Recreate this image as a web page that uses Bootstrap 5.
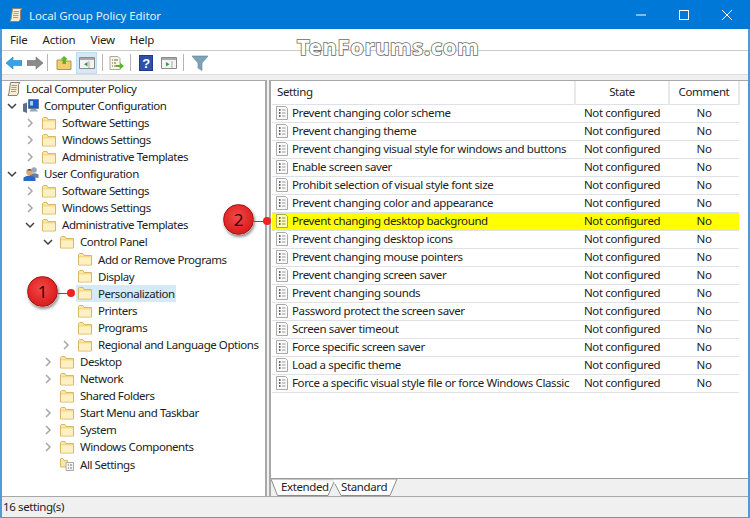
<!DOCTYPE html>
<html lang="en"><head><meta charset="utf-8"><title>Local Group Policy Editor</title>
<link href="https://cdn.jsdelivr.net/npm/bootstrap@5.3.0/dist/css/bootstrap.min.css" rel="stylesheet">
<style>
html,body{height:100%;margin:0;overflow:hidden}
body{font-family:"Noto Sans","Open Sans",sans-serif;font-size:11.5px;letter-spacing:-.38px;color:#222;background:#fff;line-height:1}
.gp-win{height:518px;width:750px;border:solid #4f9ad8;border-width:0 2px 3px 2px;position:relative}
.gp-title{height:29px;background:#0078d7;color:#e3f0fa;margin:0 -2px;padding-left:8px;position:relative;letter-spacing:-.1px}
.gp-title .gp-name{margin-left:5px;margin-top:2px}
.gp-wm{position:absolute;left:295px;top:33px;font-size:22px;font-weight:700;color:#fff;letter-spacing:.65px;-webkit-text-stroke:1.6px #6a6a6a;paint-order:stroke fill;z-index:5;line-height:26px}
.gp-cap{position:absolute;top:9px;display:block}
.gp-menu{height:21px;background:#fff;padding-left:8px;gap:15px;border-bottom:1px solid #ccc;box-sizing:content-box;letter-spacing:-.2px}
.gp-tools{height:23px;background:#fff;padding-left:4px;position:relative}
.gp-tool{width:16px;height:16px;flex:none;display:block}
.gp-sep{width:1px;height:17px;background:#b5b5b5;flex:none}
.gp-act{background:#d6e8f6;border:1px solid #bcdcf2;width:21px;height:22px;display:flex;align-items:center;justify-content:center;flex:none}
.gp-gap{height:6px;background:#f0f0f0;border-top:1px solid #ddd}
.gp-main{height:416px;background:#f0f0f0}
.gp-left{width:265px;background:#fff;border-top:1px solid #a8a8a8;border-right:2px solid #a8a8a8;flex:none;overflow:hidden}
.gp-tree{margin-top:-1px;letter-spacing:-.44px}
.gp-right{width:479px;margin-left:2px;background:#fff;border:solid #a8a8a8;border-width:1px 0 0 2px;flex:none;position:relative}
.gp-rowt{height:17.09px;display:flex;align-items:center;white-space:nowrap}
.gp-l0{padding-left:21px}.gp-l2{padding-left:39px}.gp-l3{padding-left:57px}.gp-l4{padding-left:75px}
.gp-root{padding-left:4px}
.gp-root .gp-ic{margin-right:4px}
.gp-chev{width:0;height:10px;flex:none;position:relative;display:block;overflow:visible}
.gp-chev svg{position:absolute;left:-16px;top:0}
.gp-ic{width:16px;height:16px;flex:none;display:block;margin-right:5px}
.gp-sel{background:#d5e9f8;display:flex;align-items:center;height:17px;width:100px;margin-left:-1px;padding-left:1px}
table.gp-tbl{table-layout:fixed;width:467px;margin:0 0 0 1px;--bs-table-bg:transparent}
.gp-tbl th,.gp-tbl td{padding:0;font-weight:400;vertical-align:middle;white-space:nowrap;color:#222;background:transparent;overflow:hidden}
.gp-tbl thead th{height:23px;text-align:center;border-right:2px solid #e9e9e9;padding-bottom:2px}
.gp-tbl thead th:first-child{text-align:left;padding-left:5px}
.gp-tbl tbody td{height:18px}
.gp-tbl tbody td:nth-child(2){padding-left:9px}
.gp-tbl tbody td:nth-child(3){text-align:center}
.gp-tbl .gp-hl td{background:#ff0}
.gp-cell{display:flex;align-items:center;padding-left:2px}
.gp-cell svg{width:16px;height:16px;flex:none;margin-right:2px}
.gp-tabs{position:absolute;left:0;right:0;bottom:0;height:18px;border-top:1px solid #9a9a9a;background:#f0f0f0}
.gp-tabbg{position:absolute;left:0;top:-1px;width:130px;height:18px}
.gp-tablbl{position:absolute;top:2px}
.gp-status{height:20px;background:#f0f0f0;border-top:1px solid #a8a8a8;padding-left:1px;box-sizing:content-box}
.gp-mark{position:absolute;width:31px;height:31px;border-radius:50%;background:radial-gradient(circle at 45% 40%,#f04a4a 0,#e22626 55%,#b81616 100%);border:1px solid #a01414;box-shadow:1px 2px 3px rgba(0,0,0,.45);color:#300;font-size:17px;display:flex;align-items:center;justify-content:center;z-index:6;letter-spacing:0}
.gp-dot{position:absolute;width:8px;height:8px;border-radius:50%;background:#e22;z-index:6}
.gp-line{position:absolute;height:1px;background:#d22;z-index:6}
</style></head>
<body>
<svg width="0" height="0" class="position-absolute">
<defs>
<symbol id="fo" viewBox="0 0 16 16"><path d="M1.500 3.500V14h13V4.500H7L6 2.500H2.500z" fill="#fbe6a4" stroke="#d9b765"/><path d="M2 7h12v6.500H2z" fill="#fdf0c2"/><path d="M2 5.500h12" stroke="#f3d98c"/></symbol>
<symbol id="dc" viewBox="0 0 16 16"><path d="M2.500 1.500h9l2 2v11h-11z" fill="#fafafa" stroke="#a9a9a9"/><path d="M5 5h1.500M5 8h1.500M5 11h1.500" stroke="#333" stroke-width="1.400"/><path d="M8 5h3.500M8 8h3.500M8 11h3.500" stroke="#999"/></symbol>
<symbol id="dy" viewBox="0 0 16 16"><path d="M2.500 1.500h9l2 2v11h-11z" fill="#ffffb0" stroke="#a9a94a"/><path d="M5 5h1.500M5 8h1.500M5 11h1.500" stroke="#333" stroke-width="1.400"/><path d="M8 5h3.500M8 8h3.500M8 11h3.500" stroke="#888"/></symbol>
<symbol id="sc" viewBox="0 0 16 16"><path d="M4.500 1.500h9.500l-1.500 2v8.500l-1.500 2.500h-9l1-2.500z" fill="#f5ecd2" stroke="#8c8472"/><path d="M5.500 4.500h5.500M5.500 6.500h5M5 8.500h5.500M5 10.500h5" stroke="#a89f88"/></symbol>
<symbol id="cp" viewBox="0 0 16 16"><path d="M0 6l4-1.500V15l-4-1.500z" fill="#5f6e8a"/><path d="M5.500 1.500h10v9h-10z" fill="#1c5cc8" stroke="#6a7b98"/><path d="M7 3h3v4.500H7z" fill="#a9cdf5"/><path d="M8 11h5l2 2.500H6.500z" fill="#9aa3b3"/></symbol>
<symbol id="us" viewBox="0 0 16 16"><circle cx="11" cy="4" r="2.800" fill="#9aa6ba"/><path d="M7 11V8.500q4-2.500 8.500 0V12z" fill="#6b7fa3"/><circle cx="6.500" cy="6" r="3.300" fill="#dba878"/><path d="M4 4.500q2.500-3 5 0z" fill="#5a4028"/><path d="M.5 15v-3.500q6-4 12 0V15z" fill="#2a69c7"/></symbol>
<symbol id="as" viewBox="0 0 16 16"><path d="M1.500 3V11h7V4.500H5L4 2.500H2z" fill="#fbe6a4" stroke="#d9b765"/><path d="M7 6.500h7.500v8H7z" fill="#f4f4f4" stroke="#aaa"/><path d="M9 9h1M9 12h1M11 9h2M11 12h2" stroke="#777"/></symbol>
<symbol id="ch" viewBox="0 0 10 10"><path d="M3 1l4 4-4 4" fill="none" stroke="#a6a6a6" stroke-width="1.500"/></symbol>
<symbol id="cd" viewBox="0 0 10 10"><path d="M1 3l4 4 4-4" fill="none" stroke="#404040" stroke-width="1.500"/></symbol>
</defs></svg>

<div class="gp-win">
 <div class="gp-title d-flex align-items-center">
  <svg class="gp-ic m-0" viewBox="0 0 16 16"><use href="#sc"/></svg>
  <span class="gp-name">Local Group Policy Editor</span>
  <svg class="gp-cap" style="left:635px" width="12" height="12" viewBox="0 0 12 12"><path d="M1 6h10" stroke="#fff"/></svg>
  <svg class="gp-cap" style="left:678px" width="12" height="12" viewBox="0 0 12 12"><rect x="1.500" y="1.500" width="9" height="9" fill="none" stroke="#fff"/></svg>
  <svg class="gp-cap" style="left:721px" width="12" height="12" viewBox="0 0 12 12"><path d="M1 1l10 10M11 1L1 11" stroke="#fff"/></svg>
 </div>
 <div class="gp-wm">TenForums.com</div>
 <div class="gp-menu d-flex align-items-center"><span>File</span><span>Action</span><span>View</span><span>Help</span></div>
 <div class="gp-tools d-flex align-items-center">
  <svg class="gp-tool" viewBox="0 0 16 16"><path d="M0 8l7-6v3.500h9v5H7V14z" fill="#35a4e6" stroke="#2a7fc0" stroke-width=".6"/></svg>
  <svg class="gp-tool" style="margin-left:5px" viewBox="0 0 16 16"><path d="M16 8L9 2v3.500H0v5h9V14z" fill="#8a8a8a" stroke="#6f6f6f" stroke-width=".6"/></svg>
  <span class="gp-sep" style="margin-left:4px"></span>
  <svg class="gp-tool" style="margin-left:8px" viewBox="0 0 16 16"><path d="M1 5h5l1 1h8v8.500H1z" fill="#f1cf6e" stroke="#b49640"/><path d="M8 1l4 3.500H10V9H6.500V4.500H4.500z" fill="#5ab52f"/></svg>
  <span class="gp-act" style="margin-left:4px"><svg class="gp-tool" viewBox="0 0 16 16"><path d="M.5 2.500h15v11H.5z" fill="#f4f4f4" stroke="#8a8a8a"/><path d="M1 3h14v2H1z" fill="#a9a9a9"/><path d="M10 6v7" stroke="#aaa"/><path d="M8.500 7v4.500L5 9.200z" fill="#2ea043"/></svg></span>
  <span class="gp-sep" style="margin-left:5px"></span>
  <svg class="gp-tool" style="margin-left:5px" viewBox="0 0 16 16"><path d="M2 1.500h8l2 2V14.500H2z" fill="#fbf7dc" stroke="#a9a9a9"/><path d="M4 5h1M4 8h1M4 11h1M6 5h4M6 8h2M6 11h2" stroke="#666"/><path d="M8 10h4V7.500l4 3.500-4 3.500V12H8z" fill="#5ab52f"/></svg>
  <span class="gp-sep" style="margin-left:6px"></span>
  <svg class="gp-tool" style="margin-left:7px" viewBox="0 0 16 16"><rect x="1.500" y=".5" width="13" height="15" fill="#2e4fae" stroke="#1e3a8a"/><text x="8" y="13" font-size="13" font-weight="700" fill="#fff" text-anchor="middle" font-family="Liberation Sans">?</text></svg>
  <svg class="gp-tool" style="margin-left:7px" viewBox="0 0 16 16"><path d="M.5 2.500h15v11H.5z" fill="#f4f4f4" stroke="#8a8a8a"/><path d="M1 3h14v2H1z" fill="#a9a9a9"/><path d="M11 6v7" stroke="#aaa"/><path d="M5 7v4.500L8.500 9.200z" fill="#2ea043"/></svg>
  <span class="gp-sep" style="margin-left:6px"></span>
  <svg class="gp-tool" style="margin-left:8px" viewBox="0 0 16 16"><path d="M0 1h16l-6 7v7.500l-4-2.500V8z" fill="#7ea3b8" stroke="#5f8296" stroke-width=".6"/></svg>
 </div>
 <div class="gp-gap"></div>
 <div class="gp-main d-flex">
  <div class="gp-left">
   <ul class="list-unstyled mb-0 gp-tree">
    <li class="gp-rowt gp-root"><svg class="gp-ic" viewBox="0 0 16 16"><use href="#sc"/></svg>Local Computer Policy</li>
    <li class="gp-rowt gp-l0"><span class="gp-chev"><svg width="10" height="10"><use href="#cd"/></svg></span><svg class="gp-ic" viewBox="0 0 16 16"><use href="#cp"/></svg>Computer Configuration</li>
    <li class="gp-rowt gp-l2"><span class="gp-chev"><svg width="10" height="10"><use href="#ch"/></svg></span><svg class="gp-ic" viewBox="0 0 16 16"><use href="#fo"/></svg>Software Settings</li>
    <li class="gp-rowt gp-l2"><span class="gp-chev"><svg width="10" height="10"><use href="#ch"/></svg></span><svg class="gp-ic" viewBox="0 0 16 16"><use href="#fo"/></svg>Windows Settings</li>
    <li class="gp-rowt gp-l2"><span class="gp-chev"><svg width="10" height="10"><use href="#ch"/></svg></span><svg class="gp-ic" viewBox="0 0 16 16"><use href="#fo"/></svg>Administrative Templates</li>
    <li class="gp-rowt gp-l0"><span class="gp-chev"><svg width="10" height="10"><use href="#cd"/></svg></span><svg class="gp-ic" viewBox="0 0 16 16"><use href="#us"/></svg>User Configuration</li>
    <li class="gp-rowt gp-l2"><span class="gp-chev"><svg width="10" height="10"><use href="#ch"/></svg></span><svg class="gp-ic" viewBox="0 0 16 16"><use href="#fo"/></svg>Software Settings</li>
    <li class="gp-rowt gp-l2"><span class="gp-chev"><svg width="10" height="10"><use href="#ch"/></svg></span><svg class="gp-ic" viewBox="0 0 16 16"><use href="#fo"/></svg>Windows Settings</li>
    <li class="gp-rowt gp-l2"><span class="gp-chev"><svg width="10" height="10"><use href="#cd"/></svg></span><svg class="gp-ic" viewBox="0 0 16 16"><use href="#fo"/></svg>Administrative Templates</li>
    <li class="gp-rowt gp-l3"><span class="gp-chev"><svg width="10" height="10"><use href="#cd"/></svg></span><svg class="gp-ic" viewBox="0 0 16 16"><use href="#fo"/></svg>Control Panel</li>
    <li class="gp-rowt gp-l4"><svg class="gp-ic" viewBox="0 0 16 16"><use href="#fo"/></svg>Add or Remove Programs</li>
    <li class="gp-rowt gp-l4"><svg class="gp-ic" viewBox="0 0 16 16"><use href="#fo"/></svg>Display</li>
    <li class="gp-rowt gp-l4"><span class="gp-sel"><svg class="gp-ic" viewBox="0 0 16 16"><use href="#fo"/></svg>Personalization</span></li>
    <li class="gp-rowt gp-l4"><svg class="gp-ic" viewBox="0 0 16 16"><use href="#fo"/></svg>Printers</li>
    <li class="gp-rowt gp-l4"><svg class="gp-ic" viewBox="0 0 16 16"><use href="#fo"/></svg>Programs</li>
    <li class="gp-rowt gp-l4"><span class="gp-chev"><svg width="10" height="10"><use href="#ch"/></svg></span><svg class="gp-ic" viewBox="0 0 16 16"><use href="#fo"/></svg>Regional and Language Options</li>
    <li class="gp-rowt gp-l3"><span class="gp-chev"><svg width="10" height="10"><use href="#ch"/></svg></span><svg class="gp-ic" viewBox="0 0 16 16"><use href="#fo"/></svg>Desktop</li>
    <li class="gp-rowt gp-l3"><span class="gp-chev"><svg width="10" height="10"><use href="#ch"/></svg></span><svg class="gp-ic" viewBox="0 0 16 16"><use href="#fo"/></svg>Network</li>
    <li class="gp-rowt gp-l3"><svg class="gp-ic" viewBox="0 0 16 16"><use href="#fo"/></svg>Shared Folders</li>
    <li class="gp-rowt gp-l3"><span class="gp-chev"><svg width="10" height="10"><use href="#ch"/></svg></span><svg class="gp-ic" viewBox="0 0 16 16"><use href="#fo"/></svg>Start Menu and Taskbar</li>
    <li class="gp-rowt gp-l3"><span class="gp-chev"><svg width="10" height="10"><use href="#ch"/></svg></span><svg class="gp-ic" viewBox="0 0 16 16"><use href="#fo"/></svg>System</li>
    <li class="gp-rowt gp-l3"><span class="gp-chev"><svg width="10" height="10"><use href="#ch"/></svg></span><svg class="gp-ic" viewBox="0 0 16 16"><use href="#fo"/></svg>Windows Components</li>
    <li class="gp-rowt gp-l3"><svg class="gp-ic" viewBox="0 0 16 16"><use href="#as"/></svg>All Settings</li>
   </ul>
  </div>
  <div class="gp-right">
   <table class="table gp-tbl">
    <colgroup><col style="width:303px"><col style="width:94px"><col style="width:70px"></colgroup>
    <thead><tr><th>Setting</th><th>State</th><th>Comment</th></tr></thead>
    <tbody>
     <tr><td><span class="gp-cell"><svg viewBox="0 0 16 16"><use href="#dc"/></svg>Prevent changing color scheme</span></td><td>Not configured</td><td>No</td></tr>
     <tr><td><span class="gp-cell"><svg viewBox="0 0 16 16"><use href="#dc"/></svg>Prevent changing theme</span></td><td>Not configured</td><td>No</td></tr>
     <tr><td><span class="gp-cell"><svg viewBox="0 0 16 16"><use href="#dc"/></svg>Prevent changing visual style for windows and buttons</span></td><td>Not configured</td><td>No</td></tr>
     <tr><td><span class="gp-cell"><svg viewBox="0 0 16 16"><use href="#dc"/></svg>Enable screen saver</span></td><td>Not configured</td><td>No</td></tr>
     <tr><td><span class="gp-cell"><svg viewBox="0 0 16 16"><use href="#dc"/></svg>Prohibit selection of visual style font size</span></td><td>Not configured</td><td>No</td></tr>
     <tr><td><span class="gp-cell"><svg viewBox="0 0 16 16"><use href="#dc"/></svg>Prevent changing color and appearance</span></td><td>Not configured</td><td>No</td></tr>
     <tr class="gp-hl"><td><span class="gp-cell"><svg viewBox="0 0 16 16"><use href="#dy"/></svg>Prevent changing desktop background</span></td><td>Not configured</td><td>No</td></tr>
     <tr><td><span class="gp-cell"><svg viewBox="0 0 16 16"><use href="#dc"/></svg>Prevent changing desktop icons</span></td><td>Not configured</td><td>No</td></tr>
     <tr><td><span class="gp-cell"><svg viewBox="0 0 16 16"><use href="#dc"/></svg>Prevent changing mouse pointers</span></td><td>Not configured</td><td>No</td></tr>
     <tr><td><span class="gp-cell"><svg viewBox="0 0 16 16"><use href="#dc"/></svg>Prevent changing screen saver</span></td><td>Not configured</td><td>No</td></tr>
     <tr><td><span class="gp-cell"><svg viewBox="0 0 16 16"><use href="#dc"/></svg>Prevent changing sounds</span></td><td>Not configured</td><td>No</td></tr>
     <tr><td><span class="gp-cell"><svg viewBox="0 0 16 16"><use href="#dc"/></svg>Password protect the screen saver</span></td><td>Not configured</td><td>No</td></tr>
     <tr><td><span class="gp-cell"><svg viewBox="0 0 16 16"><use href="#dc"/></svg>Screen saver timeout</span></td><td>Not configured</td><td>No</td></tr>
     <tr><td><span class="gp-cell"><svg viewBox="0 0 16 16"><use href="#dc"/></svg>Force specific screen saver</span></td><td>Not configured</td><td>No</td></tr>
     <tr><td><span class="gp-cell"><svg viewBox="0 0 16 16"><use href="#dc"/></svg>Load a specific theme</span></td><td>Not configured</td><td>No</td></tr>
     <tr><td><span class="gp-cell"><svg viewBox="0 0 16 16"><use href="#dc"/></svg>Force a specific visual style file or force Windows Classic</span></td><td>Not configured</td><td>No</td></tr>
    </tbody>
   </table>
   <div class="gp-tabs">
    <svg class="gp-tabbg" viewBox="0 0 130 18"><path d="M64 6L70 17.500H119L126 1H63z" fill="#fff" stroke="none"/><path d="M0 1L6.500 17.500H57L63 4" fill="#fff" stroke="#8a8a8a"/><path d="M64 6L70 17.500H119L126 1" fill="#fff" stroke="#8a8a8a"/><path d="M1 1h125" stroke="#9a9a9a"/></svg>
    <span class="gp-tablbl" style="left:10px">Extended</span>
    <span class="gp-tablbl" style="left:70px">Standard</span>
   </div>
  </div>
 </div>
 <div class="gp-status d-flex align-items-center">16 setting(s)</div>
 <span class="gp-mark" style="left:25px;top:276px">1</span>
 <span class="gp-dot" style="left:65px;top:289px"></span>
 <span class="gp-line" style="left:54px;top:293px;width:12px"></span>
 <span class="gp-mark" style="left:221px;top:204px">2</span>
 <span class="gp-dot" style="left:261px;top:217px"></span>
 <span class="gp-line" style="left:250px;top:221px;width:12px"></span>
</div>
<script src="https://cdn.jsdelivr.net/npm/bootstrap@5.3.0/dist/js/bootstrap.bundle.min.js"></script>
</body></html>
